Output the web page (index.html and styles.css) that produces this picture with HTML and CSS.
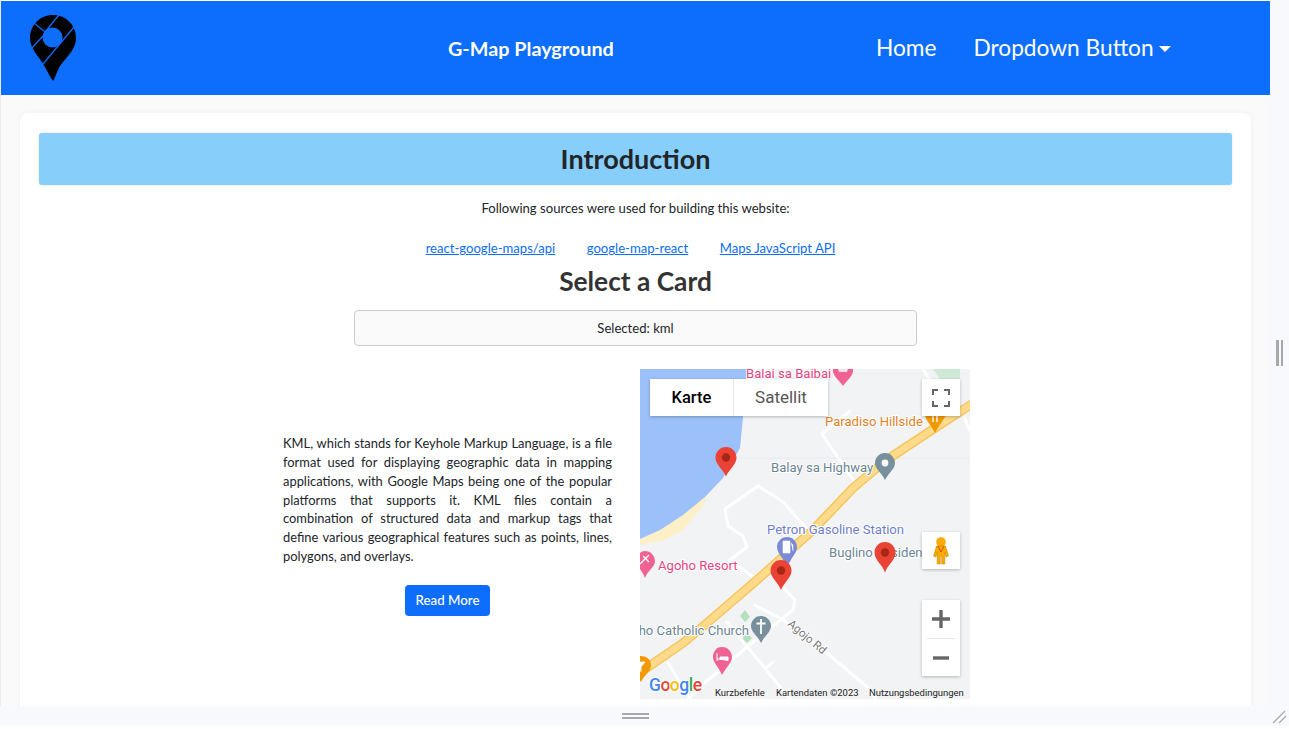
FILE: index.html
```html
<!DOCTYPE html>
<html>
    <head>
        <title>G-Map Playground</title>
        <meta name="viewport" content="width=device-width, initial-scale=1">
        <link rel="stylesheet" href="styles.css">
    </head>
    <body>
        <div class="shell">
            <div class="pane">
                <nav class="navbar">
                    <svg class="logo" width="48" height="68" viewBox="29 14 48 68">
                        <path d="M53 15C40 15 30 25 30 38C30 50 40 57 45 67C48 73 51 78 53 81C55 78 56 74 58 70C62 60 76 52 76 38C76 25 66 15 53 15Z" fill="#000"/>
                        <circle cx="52.5" cy="37.5" r="10" fill="#0d6efd"/>
                        <path d="M59 15L45 32M34 23L45 32M43 36L31 49M74 27L43 64" stroke="#0d6efd" stroke-width="1.2" fill="none"/>
                    </svg>
                    <div class="brand">G-Map Playground</div>
                    <div class="nav-links">
                        <a>Home</a>
                        <a class="dropdown">Dropdown Button</a>
                    </div>
                </nav>
                <main class="content">
                    <section class="card">
                        <h1 class="banner">Introduction</h1>
                        <p class="sources-title">Following sources were used for building this website:</p>
                        <div class="sources">
                            <a href="#">react-google-maps/api</a>
                            <a href="#">google-map-react</a>
                            <a href="#">Maps JavaScript API</a>
                        </div>
                        <h2 class="select-title">Select a Card</h2>
                        <div class="selected">Selected: kml</div>
                        <div class="demo">
                            <div class="demo-text">
                                <p>KML, which stands for Keyhole Markup Language, is a file format used for displaying geographic data in mapping applications, with Google Maps being one of the popular platforms that supports it. KML files contain a combination of structured data and markup tags that define various geographical features such as points, lines, polygons, and overlays.</p>
                                <button class="read-more">Read More</button>
                            </div>
                            <div class="map">
                                <svg class="map-canvas" width="330" height="330" viewBox="0 0 330 330">
                                    <rect width="330" height="330" fill="#f1f3f4"/>
                                    <!-- water and sand -->
                                    <path d="M0 176L25 171L43 161L62 138L68 126L40 146L0 168Z" fill="#fdf0c8"/>
                                    <path d="M0 0H108L103 48L100 79L83 109L65 128L43 146L20 161L0 170Z" fill="#9cc0f9"/>
                                    <path d="M293 0L302 13H320V0Z" fill="#ceead6"/>
                                    <path d="M99 89H330" stroke="#e8eaed" stroke-width="1"/>
                                    <path d="M100 247L105 241L110 248L105 253Z M102 270L107 264L112 269L107 274Z" fill="#b5e0c0"/>
                                    <!-- small roads -->
                                    <g fill="none" stroke="#fff" stroke-width="3" stroke-linejoin="round" stroke-linecap="round">
                                        <path d="M210 42L182 65L218 118"/>
                                        <path d="M283 0L300 27"/>
                                        <path d="M325 50L330 62"/>
                                        <path d="M172 166L143 133L118 117L85 140L88 157L103 167L107 178L90 191L117 211"/>
                                        <path d="M143 218L155 231L153 241L107 278L60 318L48 330"/>
                                        <path d="M115 236L128 243L143 251L187 284L227 318L236 330"/>
                                        <path d="M87 253L150 330"/>
                                        <path d="M127 298L133 293"/>
                                        <path d="M28 294L50 330"/>
                                    </g>
                                    <!-- highway -->
                                    <path d="M335 33L295 59L245 92L213 119L173 161L117 211L67 254L43 274L-5 307" fill="none" stroke="#f8c35c" stroke-width="9.4" stroke-linejoin="round"/>
                                    <path d="M335 33L295 59L245 92L213 119L173 161L117 211L67 254L43 274L-5 307" fill="none" stroke="#fddb8a" stroke-width="6.6" stroke-linejoin="round"/>
                                    <!-- place pins -->
                                    <path d="M193 0H213C214 6 208 10 203 17C198 10 192 6 193 0Z" fill="#f06292"/>
                                    <path d="M198 0H208L207 3H199Z" fill="#fff" opacity="0.8"/>
                                    <path d="M285 44H305C306 50 300 54 295 64C290 54 284 50 285 44Z" fill="#f29900"/>
                                    <path d="M293 47V53M297 47V53" stroke="#fff" stroke-width="1.4"/>
                                    <g fill="#78909c">
                                        <path d="M245 84C239 84 235 89 235 94C235 100 241 103 245 111C249 103 255 100 255 94C255 89 251 84 245 84Z"/>
                                        <path d="M121 247C115 247 111 252 111 257C111 263 117 266 121 274C125 266 131 263 131 257C131 252 127 247 121 247Z"/>
                                    </g>
                                    <circle cx="245" cy="94" r="3.4" fill="#fff"/>
                                    <path d="M121 250V265M116.500 254.500H125.500" stroke="#fff" stroke-width="1.800"/>
                                    <path d="M147 168C141 168 137 173 137 178C137 184 143 188 147 199C151 188 157 184 157 178C157 173 153 168 147 168Z" fill="#7b8ad6"/>
                                    <path d="M143 172H150V184H143ZM151 174L153 176V182" fill="#fff" stroke="#fff" stroke-width="0.600"/>
                                    <path d="M5 182C0 182 -3 187 -3 192C-3 198 2 201 5 209C8 201 15 198 15 192C15 187 11 182 5 182Z" fill="#f06292"/>
                                    <path d="M0 195L9 186M3 187L9 193" stroke="#fff" stroke-width="1.300"/>
                                    <path d="M82 278C76 278 73 283 73 288C73 294 79 298 82 306C86 298 92 294 92 288C92 283 88 278 82 278Z" fill="#f06292"/>
                                    <path d="M77 284V292M77 290H88V292M80 288H88V290H80Z" fill="#fff" stroke="#fff" stroke-width="1"/>
                                    <path d="M1 287C-5 287 -9 291 -9 296C-9 302 -3 305 1 313C5 305 11 302 11 296C11 291 7 287 1 287Z" fill="#f29900"/>
                                    <path d="M-3 293H5L1 298V303" fill="#fff" stroke="#fff" stroke-width="0.800"/>
                                    <!-- labels -->
                                    <g class="map-labels">
                                        <text class="lbl-pink" x="106" y="9">Balai sa Baibai</text>
                                        <text class="lbl-orange" x="185" y="57">Paradiso Hillside</text>
                                        <text class="lbl-grey" x="131" y="103">Balay sa Highway</text>
                                        <text class="lbl-blue" x="127" y="165">Petron Gasoline Station</text>
                                        <text class="lbl-grey" x="189" y="188">Buglino Residence</text>
                                        <text class="lbl-pink" x="18" y="201">Agoho Resort</text>
                                        <text class="lbl-grey" x="109" y="266" text-anchor="end">Agoho Catholic Church</text>
                                        <text class="lbl-road" transform="translate(147 256) rotate(40)">Agojo Rd</text>
                                    </g>
                                    <!-- red markers -->
                                    <g id="marker-group">
                                        <path d="M86 78C80 78 75.500 83 75.500 88.500C75.500 96 83 100 86 107.500C89 100 96.500 96 96.500 88.500C96.500 83 92 78 86 78Z" fill="#ea4335"/>
                                        <circle cx="86" cy="88.500" r="4.200" fill="#a52714"/>
                                        <path d="M245 173C239 173 234.500 178 234.500 183.500C234.500 191 242 195 245 203.500C248 195 255.500 191 255.500 183.500C255.500 178 251 173 245 173Z" fill="#ea4335"/>
                                        <circle cx="245" cy="183.500" r="4.200" fill="#a52714"/>
                                        <path d="M141 191C135 191 130.500 196 130.500 201.500C130.500 209 138 213 141 221C144 213 151.500 209 151.500 201.500C151.500 196 147 191 141 191Z" fill="#ea4335"/>
                                        <circle cx="141" cy="201.500" r="4.200" fill="#a52714"/>
                                    </g>
                                    <!-- google logo and attribution -->
                                    <text class="google" x="9" y="322"><tspan fill="#4285f4">G</tspan><tspan fill="#ea4335">o</tspan><tspan fill="#fbbc05">o</tspan><tspan fill="#4285f4">g</tspan><tspan fill="#34a853">l</tspan><tspan fill="#ea4335">e</tspan></text>
                                    <text class="attr" x="75" y="327">Kurzbefehle</text>
                                    <text class="attr" x="136" y="327">Kartendaten ©2023</text>
                                    <text class="attr" x="229" y="327">Nutzungsbedingungen</text>
                                </svg>
                                <div class="map-type">
                                    <span class="map-type-on">Karte</span>
                                    <span class="map-type-off">Satellit</span>
                                </div>
                                <div class="map-btn fullscreen">
                                    <svg width="18" height="18" viewBox="0 0 18 18"><path d="M1 6V1H6M12 1H17V6M17 12V17H12M6 17H1V12" fill="none" stroke="#666" stroke-width="2"/></svg>
                                </div>
                                <div class="map-btn pegman">
                                    <svg width="16" height="28" viewBox="0 0 16 28">
                                        <circle cx="8" cy="5" r="4.800" fill="#f9ab00"/>
                                        <path d="M3.500 9H12.500L15.500 19L13 20L11.800 15V27H8.700V19H7.300V27H4.200V15L3 20L0.500 19Z" fill="#f9ab00" stroke="#c77f00" stroke-width="0.500"/>
                                        <path d="M5 9L8 15L11 9" fill="none" stroke="#d93025" stroke-width="0.800"/>
                                    </svg>
                                </div>
                                <div class="map-btn zoom">
                                    <svg width="18" height="18" viewBox="0 0 18 18"><path d="M0 9H18M9 0V18" stroke="#666" stroke-width="3.400"/></svg>
                                    <span class="zoom-line"></span>
                                    <svg width="18" height="18" viewBox="0 0 18 18"><path d="M1 9H17" stroke="#666" stroke-width="3.400"/></svg>
                                </div>
                            </div>
                        </div>
                    </section>
                </main>
            </div>
            <div class="side-handle"><span></span><span></span></div>
            <div class="bottom-handle">
                <span class="grip"></span>
                <svg class="corner" width="16" height="16" viewBox="0 0 16 16"><path d="M1 14L13 2M7 14L14 7" stroke="#a8a8a8" stroke-width="1.200"/></svg>
            </div>
        </div>
    </body>
</html>
```

FILE: styles.css
```css
* {box-sizing: border-box;}
html, body {margin: 0; height: 100%; overflow: hidden; background: #fff;}
body {font-family: "Lato", sans-serif; color: #212529; font-size: 13.1px;}

.shell {display: grid; grid-template-columns: 1270px 19px; grid-template-rows: 706px 20px; width: 1289px;}
.pane {display: flex; flex-direction: column; overflow: hidden; background: #fafafa; border-left: 1px solid #ececec; border-top: 1px solid #fff;}

.navbar {display: flex; align-items: center; flex: none; height: 94px; background: #0d6efd; color: #fff; padding: 0 0 0 28px;}
.logo {flex: none; margin-top: -1px;}
.brand {font-size: 19.800px; font-weight: 700; margin: -1px 0 0 371px; width: 428px;}
.nav-links {display: flex; gap: 37px; font-size: 22.700px; margin-top: -1px;}
.dropdown::after {content: ""; display: inline-block; margin-left: 5px; vertical-align: 4px; border-top: 6px solid #fff; border-left: 6px solid transparent; border-right: 6px solid transparent;}

.content {flex: 1; min-height: 0; padding: 18px 19px 0;}
.card {height: 640px; background: #fff; border-radius: 8px; box-shadow: 0 0 6px rgba(0, 0, 0, 0.05); padding: 20px 19px; text-align: center;}

.banner {margin: 0; height: 52px; line-height: 52px; background: #87cefa; border-radius: 3px; font-size: 27px; font-weight: 700; box-shadow: 0 0 2px rgba(0, 0, 0, 0.15);}
.sources-title {margin: 15px 0 0; line-height: 16px;}
.sources {display: flex; justify-content: center; gap: 31.500px; margin-top: 24px; padding-right: 10px; line-height: 16px;}
.sources a {color: #0d6efd;}
.select-title {margin: 9px 0 0; font-size: 26.300px; line-height: 33px; font-weight: 700; color: #333;}
.selected {width: 563px; height: 36px; line-height: 34px; margin: 12px auto 0; background: #fafafa; border: 1px solid #ccc; border-radius: 4px;}

.demo {display: flex; justify-content: center; align-items: center; gap: 28px; margin-top: 23px; padding-right: 18px;}
.demo-text {width: 329px; padding-bottom: 18px; text-align: center;}
.demo-text p {margin: 0; font-size: 12.900px; text-align: justify; line-height: 18.850px;}
.read-more {margin-top: 19px; width: 85px; height: 31px; border: 0; border-radius: 4px; background: #0d6efd; color: #fff; font-family: "Lato", sans-serif; font-size: 13.300px; font-weight: 500;}

.map {position: relative; width: 330px; height: 330px; flex: none; overflow: hidden;}
.map-canvas {display: block;}
.map-labels text {font-family: "Roboto", sans-serif; font-size: 13.100px; stroke: #fff; stroke-width: 2px; paint-order: stroke; stroke-linejoin: round;}
.lbl-pink {fill: #e8437f;}
.lbl-orange {fill: #e37f1f;}
.lbl-grey {fill: #6c8595;}
.lbl-blue {fill: #6f7dcb;}
.map-labels .lbl-road {fill: #7a7a7a; font-size: 11.500px;}
.google {font-family: "Roboto", sans-serif; font-size: 17.500px; font-weight: 500; letter-spacing: -0.500px; stroke: #fff; stroke-width: 2px; paint-order: stroke;}
.attr {font-family: "Roboto", sans-serif; font-size: 9.450px; fill: #222;}

.map-type {position: absolute; left: 10px; top: 10px; display: flex; height: 37px; background: #fff; box-shadow: 0 1px 3px rgba(0, 0, 0, 0.25); font-family: "Roboto", sans-serif; font-size: 16.500px; line-height: 37px;}
.map-type-on {width: 84px; text-align: center; font-weight: 500; color: #000; border-right: 1px solid #e6e6e6;}
.map-type-off {width: 94px; text-align: center; color: #565656; font-size: 17px;}

.map-btn {position: absolute; left: 282px; width: 38px; display: flex; flex-direction: column; align-items: center; justify-content: center; background: #fff; box-shadow: 0 1px 3px rgba(0, 0, 0, 0.25);}
.fullscreen {top: 10px; height: 37px;}
.pegman {top: 163px; height: 37px;}
.zoom {top: 231px; height: 76px; gap: 10px;}
.zoom-line {width: 28px; height: 1px; background: #e6e6e6;}

.side-handle {display: flex; justify-content: center; align-items: center; gap: 2px; background: #f8f9fd;}
.side-handle span {width: 2.500px; height: 26px; background: #a8a8a8;}
.bottom-handle {grid-column: 1 / 3; position: relative; display: flex; justify-content: center; align-items: center; padding-right: 19px; background: #f8f9fd;}
.grip {width: 27px; height: 6px; border-top: 2px solid #a8a8a8; border-bottom: 2px solid #a8a8a8;}
.corner {position: absolute; right: 1px; top: 3px;}
```
